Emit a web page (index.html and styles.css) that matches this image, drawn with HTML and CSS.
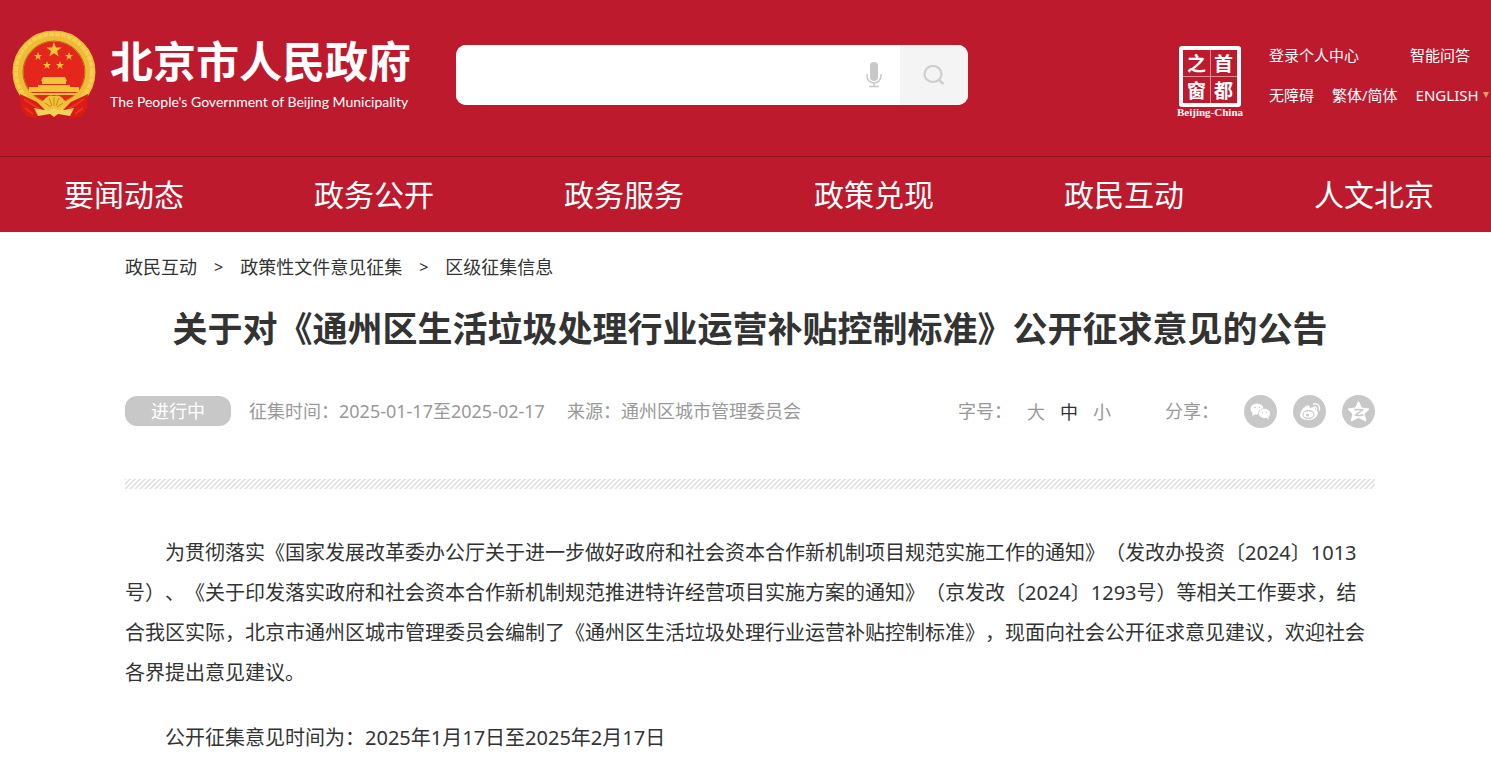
FILE: index.html
```html
<!DOCTYPE html>
<html lang="zh-CN">
<head>
    <meta charset="UTF-8">
    <meta name="viewport" content="width=device-width, initial-scale=1.0">
    <title>公开征求意见的公告</title>
    <link rel="stylesheet" href="styles.css">
</head>
<body>

<header class="header">
    <div class="top">
        <a class="logo" href="#">
            <svg class="emblem" viewBox="0 0 84 90" aria-hidden="true">
                <path d="M9 60 L75 60 L75 78 L67 88 L54 86 L42 89 L30 86 L17 88 L9 78 Z" fill="#c81a12"/>
                <circle cx="42" cy="42" r="36" fill="#e5261c" stroke="#eebb36" stroke-width="11"/>
                <circle cx="42" cy="42" r="38" fill="none" stroke="#f5cd50" stroke-width="4" stroke-dasharray="5 1"/>
                <circle cx="42" cy="42" r="31" fill="none" stroke="#b8681a" stroke-width="1"/>
                <path d="M8 64 L25 72 L33 80 L24 88 L14 86 L9 78Z M76 64 L59 72 L51 80 L60 88 L70 86 L75 78Z" fill="#d91c14"/>
                <path d="M12 69 Q20 75 28 79 M13 78 L21 84 M72 69 Q64 75 56 79 M71 78 L63 84" fill="none" stroke="#e83424" stroke-width="2"/>
                <g fill="#f3c536">
                    <path d="M42 12 L43.900 17.500 L49.600 17.500 L45 21 L46.700 26.500 L42 23.200 L37.300 26.500 L39 21 L34.400 17.500 L40.100 17.500 Z"/>
                    <path d="M26 22 l1 3 h3 l-2.400 2 1 3 -2.600 -2 -2.600 2 1 -3 -2.400 -2 h3z"/>
                    <path d="M57 22 l1 3 h3 l-2.400 2 1 3 -2.600 -2 -2.600 2 1 -3 -2.400 -2 h3z"/>
                    <path d="M35 31 l1 3 h3 l-2.400 2 1 3 -2.600 -2 -2.600 2 1 -3 -2.400 -2 h3z"/>
                    <path d="M48 31 l1 3 h3 l-2.400 2 1 3 -2.600 -2 -2.600 2 1 -3 -2.400 -2 h3z"/>
                    <path d="M31 47 h22 l2 4 h-1 v3 h-24 v-3 h-1z"/>
                    <path d="M26 55 h32 v2 h9 v5 h-50 v-5 h9z"/>
                    <path d="M17 63 h50 l-2 2 h-46z"/>
                </g>
                <path d="M42 66 Q36 64 32 70 Q28 74 32 78 L42 81 L52 78 Q56 74 52 70 Q48 64 42 66Z" fill="#f0c23a"/>
                <path d="M42 67 v9 M37 68 l3 8 M47 68 l-3 8 M33 73 l6 4 M51 73 l-6 4" stroke="#c98a18" stroke-width="1"/>
                <path d="M22 78 L37 81 L42 78 L47 81 L62 78 L58 86 L46 84 L42 87 L38 84 L26 86Z" fill="#f5d060"/>
            </svg>
            <span class="logo-text">
                <span class="logo-cn">北京市人民政府</span>
                <span class="logo-en">The People's Government of Beijing Municipality</span>
            </span>
        </a>

        <form class="search">
            <input type="text" aria-label="搜索">
            <button type="button" class="voice" aria-label="语音">
                <svg width="16" height="26" viewBox="0 0 16 26">
                    <rect x="4" y="0" width="8" height="19" rx="4" fill="#c8c8c8"/>
                    <path d="M1 12 v2 a7 7 0 0 0 14 0 v-2 M8 21 v3 M3 24.500 h10" fill="none" stroke="#c8c8c8" stroke-width="1.500"/>
                </svg>
            </button>
            <button type="submit" class="search-btn" aria-label="搜索">
                <svg width="22" height="20" viewBox="0 0 22 20">
                    <ellipse cx="10" cy="9" rx="8.500" ry="8" fill="none" stroke="#cfcfcf" stroke-width="2.200"/>
                    <path d="M16 15 l4.500 4" stroke="#cfcfcf" stroke-width="2.500"/>
                </svg>
            </button>
        </form>

        <div class="seal">
            <div class="seal-box">
                <span>之</span><span>首</span>
                <span>窗</span><span>都</span>
            </div>
            <div class="seal-name">Beijing-China</div>
        </div>

        <div class="links">
            <div class="links-row">
                <a class="user" href="#">登录个人中心</a>
                <a href="#">智能问答</a>
            </div>
            <div class="links-row">
                <a href="#">无障碍</a>
                <a href="#">繁体/简体</a>
                <a class="english" href="#">ENGLISH</a>
            </div>
        </div>
    </div>

    <nav class="nav">
        <a href="#">要闻动态</a>
        <a href="#">政务公开</a>
        <a href="#">政务服务</a>
        <a href="#">政策兑现</a>
        <a href="#">政民互动</a>
        <a href="#">人文北京</a>
    </nav>
</header>

<main class="container">
    <div class="crumbs">
        <a href="#">政民互动</a>
        <span>&gt;</span>
        <a href="#">政策性文件意见征集</a>
        <span>&gt;</span>
        <a href="#">区级征集信息</a>
    </div>

    <h1>关于对《通州区生活垃圾处理行业运营补贴控制标准》公开征求意见的公告</h1>

    <div class="meta">
        <span class="status">进行中</span>
        <span class="date">征集时间：2025-01-17至2025-02-17</span>
        <span>来源：通州区城市管理委员会</span>
        <div class="font-size">
            <span>字号：</span>
            <button type="button">大</button>
            <button type="button" class="active">中</button>
            <button type="button">小</button>
        </div>
        <span class="share-label">分享：</span>
        <div class="share">
            <a href="#" aria-label="微信">
                <svg viewBox="0 0 33 33">
                    <ellipse cx="13" cy="14" rx="6.500" ry="5.500" fill="#fff"/>
                    <path d="M9 17 l-1 4 4 -2z" fill="#fff"/>
                    <ellipse cx="20.500" cy="18.500" rx="6" ry="5" fill="#fff" stroke="#c8c8c8" stroke-width=".8"/>
                    <path d="M22 22.500 l3 2 -1 -3z" fill="#fff"/>
                    <g fill="#c8c8c8"><circle cx="11" cy="12.500" r=".8"/><circle cx="15.500" cy="12.500" r=".8"/><circle cx="18.500" cy="17.500" r=".7"/><circle cx="22.500" cy="17.500" r=".7"/></g>
                </svg>
            </a>
            <a href="#" aria-label="微博">
                <svg viewBox="0 0 33 33">
                    <path d="M13 11 Q17 9 17 13 Q23 11 22.500 15 Q26 16 24.500 19.500 Q22 25 15 25 Q7 24.500 7 20 Q8 14 13 11Z" fill="#fff"/>
                    <ellipse cx="15.500" cy="19.500" rx="5.500" ry="3.800" fill="none" stroke="#c8c8c8" stroke-width="1.200"/>
                    <circle cx="14.500" cy="20" r="1.500" fill="#c8c8c8"/>
                    <path d="M20.500 9 Q27 8 26.500 15 M21 12 Q24 12 23.500 14.500" fill="none" stroke="#fff" stroke-width="1.300" stroke-linecap="round"/>
                </svg>
            </a>
            <a href="#" aria-label="QQ空间">
                <svg viewBox="0 0 33 33">
                    <path d="M16.500 6.500 L19.500 13 L27 14 L22 19 L24 26 L16.500 22.500 L9 26 L11 19 L6 14 L13.500 13 Z" fill="#fff" stroke="#fff" stroke-linejoin="round"/>
                    <path d="M12.500 14.800 Q17 14 20.500 15 L13.500 20 Q17 21 21.500 20" fill="none" stroke="#c8c8c8" stroke-width="1.400"/>
                </svg>
            </a>
        </div>
    </div>

    <div class="stripes"></div>

    <article class="content">
        <p>为贯彻落实《国家发展改革委办公厅关于进一步做好政府和社会资本合作新机制项目规范实施工作的通知》（发改办投资〔2024〕1013号）、《关于印发落实政府和社会资本合作新机制规范推进特许经营项目实施方案的通知》（京发改〔2024〕1293号）等相关工作要求，结合我区实际，北京市通州区城市管理委员会编制了《通州区生活垃圾处理行业运营补贴控制标准》，现面向社会公开征求意见建议，欢迎社会各界提出意见建议。</p>
        <p>公开征集意见时间为：2025年1月17日至2025年2月17日</p>
    </article>
</main>

</body>
</html>
```
FILE: styles.css
```css
* {
    box-sizing: border-box;
}

body {
    margin: 0;
    font-family: "Noto Sans", "Noto Sans CJK SC", sans-serif;
    color: #333;
    background-color: #fff;
    text-spacing-trim: space-all;
}

a {
    color: inherit;
    text-decoration: none;
}

button {
    border: none;
    padding: 0;
    background: none;
    font-family: inherit;
    color: inherit;
    cursor: pointer;
}

.header {
    background-color: #bd1a2d;
    color: #fff;
}

.top {
    display: flex;
    align-items: flex-start;
    height: 156px;
    padding: 30px 0 0 12px;
}

.logo {
    display: flex;
    margin-right: 41px;
}

.emblem {
    width: 84px;
    height: 90px;
    margin-right: 14px;
}

.logo-text {
    width: 305px;
    white-space: nowrap;
}

.logo-cn,
.logo-en {
    display: block;
}

.logo-cn {
    padding-top: 2px;
    font-size: 43px;
    font-weight: bold;
    line-height: 60px;
}

.logo-en {
    font-family: Lato, sans-serif;
    font-size: 14px;
    line-height: 20px;
}

.search {
    display: flex;
    width: 512px;
    height: 60px;
    margin-top: 15px;
    border-radius: 10px;
    background-color: #fff;
    overflow: hidden;
}

.search input {
    flex: 1;
    min-width: 0;
    border: none;
    outline: none;
    padding: 0 20px;
    font-size: 18px;
}

.voice {
    width: 52px;
}

.voice svg,
.search-btn svg {
    display: block;
    margin: 0 auto;
}

.search-btn {
    width: 68px;
    background-color: #f4f4f4;
}

.seal {
    width: 70px;
    margin: 16px 24px 0 auto;
    text-align: center;
}

.seal-box {
    display: grid;
    grid-template-columns: 1fr 1fr;
    width: 62px;
    height: 61px;
    margin: 0 auto;
    border: 4px solid #fff;
    border-radius: 3px;
    background: linear-gradient(#e08a94, #e08a94) center / 1px 100% no-repeat, linear-gradient(#e08a94, #e08a94) center / 100% 1px no-repeat;
    font-family: "Noto Sans CJK SC", sans-serif;
    font-size: 19px;
    font-weight: bold;
    line-height: 26px;
}

.seal-name {
    font-family: "Liberation Serif", serif;
    font-size: 11px;
    font-weight: bold;
    line-height: 10px;
}

.links {
    width: 222px;
    padding-top: 15px;
    font-size: 15px;
    white-space: nowrap;
}

.links-row {
    display: flex;
    align-items: flex-start;
    gap: 18px;
    height: 40px;
    line-height: 20px;
}

.user {
    margin-right: 33px;
}

.english {
    display: flex;
    align-items: center;
    gap: 4px;
}

.english::after {
    content: "";
    border: 3px solid transparent;
    border-top: 6px solid #d9a066;
    border-bottom: none;
}

.nav {
    display: flex;
    justify-content: space-between;
    padding: 0 57px 0 64px;
    border-top: 1px solid #8f1422;
    font-size: 30px;
    line-height: 75px;
}

.container {
    padding: 0 116px 0 125px;
}

.crumbs {
    display: flex;
    gap: 17px;
    padding-top: 20px;
    font-size: 18px;
    line-height: 30px;
}

.crumbs span {
    font-size: 16px;
}

h1 {
    margin: 22px 0 0;
    font-size: 35px;
    line-height: 50px;
    text-align: center;
}

.meta {
    display: flex;
    align-items: center;
    height: 32px;
    margin-top: 41px;
    font-size: 18px;
    line-height: 30px;
    color: #999;
    white-space: nowrap;
}

.status {
    width: 106px;
    margin-right: 18px;
    border-radius: 12px;
    background-color: #c8c8c8;
    color: #fff;
    text-align: center;
}

.date {
    margin-right: 22px;
}

.font-size {
    display: flex;
    gap: 15px;
    margin-left: auto;
}

.font-size button {
    font-size: 18px;
}

.font-size .active {
    color: #333;
}

.share-label {
    margin-left: 54px;
}

.share {
    display: flex;
    gap: 16px;
    margin-left: 25px;
}

.share a {
    width: 33px;
    height: 33px;
    border-radius: 50%;
    background-color: #c8c8c8;
}

.share svg {
    display: block;
}

.stripes {
    height: 10px;
    margin-top: 52px;
    background: linear-gradient(135deg, #e0e0e0 12%, #fff 20%, #fff 35%, #e0e0e0 45%, #e0e0e0 58%, #fff 66%, #fff 84%, #e0e0e0 95%) 0 0 / 5px 5px;
}

.content {
    padding-top: 44px;
    font-size: 20px;
    line-height: 40px;
}

.content p {
    margin: 0 0 25px;
    text-indent: 2em;
}
```
